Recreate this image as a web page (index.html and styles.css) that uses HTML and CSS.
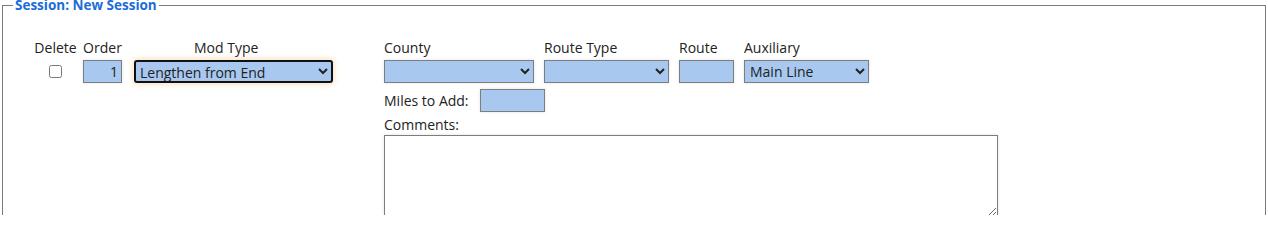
FILE: index.html
```html
<!DOCTYPE html>
<html>
<head>
<meta charset="utf-8">
<link rel="stylesheet" href="styles.css">
</head>
<body>
<div class="page">
<fieldset class="session">
  <legend class="session-title">Session: New Session</legend>
  <div class="content">
    <div class="left-grid">
      <div class="hdr c1">Delete</div>
      <div class="hdr c2">Order</div>
      <div class="hdr c3">Mod Type</div>
      <div class="cell c1"><input type="checkbox" class="chk"></div>
      <div class="cell c2"><input type="text" class="fld order" value="1"></div>
      <div class="cell c3">
        <select class="fld modtype">
          <option>Lengthen from End</option>
        </select>
      </div>
    </div>
    <div class="right">
      <div class="top-row">
        <div class="field">
          <label class="lbl">County</label>
          <select class="fld county"><option></option></select>
        </div>
        <div class="field">
          <label class="lbl">Route Type</label>
          <select class="fld rtype"><option></option></select>
        </div>
        <div class="field">
          <label class="lbl">Route</label>
          <input type="text" class="fld route">
        </div>
        <div class="field">
          <label class="lbl">Auxiliary</label>
          <select class="fld aux"><option>Main Line</option></select>
        </div>
      </div>
      <div class="miles-row">
        <label class="lbl">Miles to Add:</label>
        <input type="text" class="fld miles">
      </div>
      <label class="lbl comments-lbl">Comments:</label>
      <textarea class="comments"></textarea>
    </div>
  </div>
</fieldset>
</div>
</body>
</html>
```

FILE: styles.css
```css
html, body {
  margin: 0;
  padding: 0;
  background: #ffffff;
  overflow: hidden;
}
body {
  font-family: "Open Sans", "Noto Sans", sans-serif;
  font-size: 14px;
  color: #222;
}
.page {
  height: 215px;
  overflow: hidden;
}
.session {
  margin: 0 2px;
  border: 1px solid #7a7a7a;
  padding: 0;
  min-height: 260px;
}
.session-title {
  color: #1b6cd8;
  font-weight: bold;
  font-size: 13.5px;
  padding: 0 2px;
  margin-left: 10px;
  line-height: 11px;
}
.content {
  display: flex;
  align-items: flex-start;
  padding-top: 27px;
}
.left-grid {
  display: grid;
  grid-template-columns: 49px 39px 208px;
  column-gap: 3px;
  row-gap: 3px;
  margin-left: 28px;
}
.hdr {
  text-align: center;
  line-height: 19px;
  white-space: nowrap;
}
.hdr.c3 {
  text-align: left;
  padding-left: 69px;
}
.cell {
  display: flex;
  align-items: center;
  justify-content: center;
  height: 23px;
}
.cell.c3 {
  padding-left: 9px;
  justify-content: flex-start;
}
.chk {
  margin: 0;
  width: 13px;
  height: 13px;
}
.fld {
  box-sizing: border-box;
  flex: none;
  height: 23px;
  background: #a8c8ef;
  border: 1px solid #7d7d7d;
  border-radius: 0;
  font-family: inherit;
  font-size: 14px;
  color: #222;
  margin: 0;
  box-shadow: 0 0 3px rgba(0,0,0,0.12);
}
.order {
  width: 39px;
  text-align: right;
  padding: 0 3px;
}
.modtype {
  width: 199px;
  border: 2px solid #111;
  border-radius: 3px;
  box-shadow: 0 0 5px 2px rgba(245, 200, 140, 0.45);
  padding-left: 0;
}
.right {
  display: flex;
  flex-direction: column;
  margin-left: 51px;
}
.top-row {
  display: flex;
  gap: 10px;
}
.field {
  display: flex;
  flex-direction: column;
  row-gap: 3px;
}
.lbl {
  line-height: 19px;
  white-space: nowrap;
}
.county { width: 150px; }
.rtype { width: 125px; }
.route { width: 55px; }
.aux { width: 125px; padding-left: 1px; }
.miles-row {
  display: flex;
  align-items: center;
  gap: 11px;
  margin-top: 6px;
}
.miles { width: 65px; }
.comments-lbl {
  margin-top: 3px;
}
.comments {
  box-sizing: border-box;
  width: 614px;
  height: 82px;
  margin: 1px 0 0 0;
  border: 1px solid #7d7d7d;
  font-family: inherit;
  font-size: 14px;
  box-shadow: 0 0 3px rgba(0,0,0,0.12);
}
```
